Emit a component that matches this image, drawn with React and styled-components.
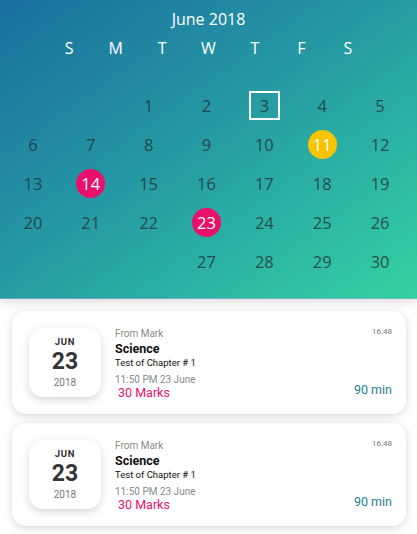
import React from "react";
import styled, { createGlobalStyle } from "styled-components";

const GlobalStyle = createGlobalStyle`
  html, body {
    margin: 0;
    padding: 0;
    background: #ffffff;
  }
  * {
    box-sizing: border-box;
  }
`;

const Page = styled.div`
  width: 417px;
  min-height: 534px;
  background: #ffffff;
  overflow: hidden;
`;

const CalendarHeader = styled.div`
  height: 299px;
  padding-top: 8px;
  background: linear-gradient(to bottom right, #1a6f9f 0%, #2598a3 45%, #33d1a3 100%);
  border-bottom: 1px solid rgba(255, 255, 255, 0.35);
  box-shadow: 0 3px 10px rgba(0, 0, 0, 0.14);
  font-family: "Open Sans", "Noto Sans", sans-serif;
`;

const MonthTitle = styled.div`
  text-align: center;
  color: #ffffff;
  font-size: 16px;
  line-height: 22px;
`;

const WeekRow = styled.div`
  width: 325px;
  margin: 7px auto 0;
  display: grid;
  grid-template-columns: repeat(7, 1fr);
  color: #ffffff;
  font-size: 16px;
  line-height: 22px;
  text-align: center;
`;

const DayGrid = styled.div`
  margin-top: 27px;
  padding: 0 8px 0 4px;
  display: grid;
  grid-template-columns: repeat(7, 1fr);
  grid-auto-rows: 39px;
`;

const Cell = styled.div`
  display: flex;
  align-items: center;
  justify-content: center;
`;

const Day = styled.span`
  display: flex;
  align-items: center;
  justify-content: center;
  font-size: 16.5px;
  width: ${(p) => (p.$boxed ? "31px" : "29px")};
  height: 29px;
  border-radius: ${(p) => (p.$mark ? "50%" : "0")};
  background: ${(p) => p.$mark || "transparent"};
  border: ${(p) => (p.$boxed ? "2px solid #ffffff" : "none")};
  color: ${(p) => (p.$mark ? "#ffffff" : "rgba(38, 48, 52, 0.8)")};
`;

const CardList = styled.div`
  padding: 12px 11px 0 12px;
  display: flex;
  flex-direction: column;
  gap: 9px;
  font-family: "Roboto", "Liberation Sans", sans-serif;
`;

const Card = styled.div`
  display: flex;
  align-items: stretch;
  height: 103px;
  padding: 17px 14px 17px 17px;
  background: #ffffff;
  border-radius: 14px;
  box-shadow: 0 2px 8px rgba(0, 0, 0, 0.16);
`;

const DateBox = styled.div`
  width: 72px;
  height: 69px;
  flex-shrink: 0;
  padding-top: 8px;
  border-radius: 14px;
  background: #ffffff;
  box-shadow: 0 3px 8px rgba(0, 0, 0, 0.16);
  display: flex;
  flex-direction: column;
  align-items: center;
`;

const BoxMonth = styled.div`
  font-size: 9.5px;
  font-weight: 700;
  letter-spacing: 0.8px;
  line-height: 12px;
  color: #333333;
`;

const BoxDay = styled.div`
  font-size: 23px;
  font-weight: 700;
  line-height: 28px;
  color: #333333;
`;

const BoxYear = styled.div`
  font-size: 10px;
  line-height: 14px;
  color: #777777;
`;

const Info = styled.div`
  flex: 1;
  margin-left: 14px;
  display: flex;
  flex-direction: column;
`;

const From = styled.div`
  font-size: 10px;
  line-height: 11px;
  color: #8a8a8a;
`;

const Subject = styled.div`
  margin-top: 2px;
  font-size: 12.5px;
  font-weight: 700;
  line-height: 16px;
  color: #111111;
`;

const Topic = styled.div`
  font-size: 9.5px;
  line-height: 12px;
  color: #111111;
`;

const When = styled.div`
  margin-top: 4px;
  font-size: 10px;
  line-height: 13px;
  color: #8a8a8a;
`;

const Marks = styled.div`
  padding-left: 3px;
  font-size: 12.5px;
  line-height: 14px;
  color: #e8106b;
`;

const Side = styled.div`
  display: flex;
  flex-direction: column;
  justify-content: space-between;
  align-items: flex-end;
`;

const Time = styled.div`
  margin-top: -1px;
  font-size: 8px;
  line-height: 10px;
  color: #777777;
`;

const Duration = styled.div`
  font-size: 12.5px;
  line-height: 14px;
  color: #2a7d99;
`;

const weekdays = ["S", "M", "T", "W", "T", "F", "S"];

const days = [
  null, null, 1, 2, 3, 4, 5,
  6, 7, 8, 9, 10, 11, 12,
  13, 14, 15, 16, 17, 18, 19,
  20, 21, 22, 23, 24, 25, 26,
  null, null, null, 27, 28, 29, 30,
];

const marks = { 11: "#f8c400", 14: "#e8106b", 23: "#e8106b" };

const tests = [
  { id: 1, from: "Mark", subject: "Science", topic: "Test of Chapter # 1", when: "11:50 PM 23 June", marks: 30, time: "16:48", duration: 90 },
  { id: 2, from: "Mark", subject: "Science", topic: "Test of Chapter # 1", when: "11:50 PM 23 June", marks: 30, time: "16:48", duration: 90 },
];

const App = () => {
  return (
    <Page>
      <GlobalStyle />
      <CalendarHeader>
        <MonthTitle>June 2018</MonthTitle>
        <WeekRow>
          {weekdays.map((d, i) => (
            <span key={i}>{d}</span>
          ))}
        </WeekRow>
        <DayGrid>
          {days.map((d, i) => (
            <Cell key={i}>
              {d && (
                <Day $mark={marks[d]} $boxed={d === 3}>
                  {d}
                </Day>
              )}
            </Cell>
          ))}
        </DayGrid>
      </CalendarHeader>

      <CardList>
        {tests.map((t) => (
          <Card key={t.id}>
            <DateBox>
              <BoxMonth>JUN</BoxMonth>
              <BoxDay>23</BoxDay>
              <BoxYear>2018</BoxYear>
            </DateBox>
            <Info>
              <From>From {t.from}</From>
              <Subject>{t.subject}</Subject>
              <Topic>{t.topic}</Topic>
              <When>{t.when}</When>
              <Marks>{t.marks} Marks</Marks>
            </Info>
            <Side>
              <Time>{t.time}</Time>
              <Duration>{t.duration} min</Duration>
            </Side>
          </Card>
        ))}
      </CardList>
    </Page>
  );
};

export default App;
